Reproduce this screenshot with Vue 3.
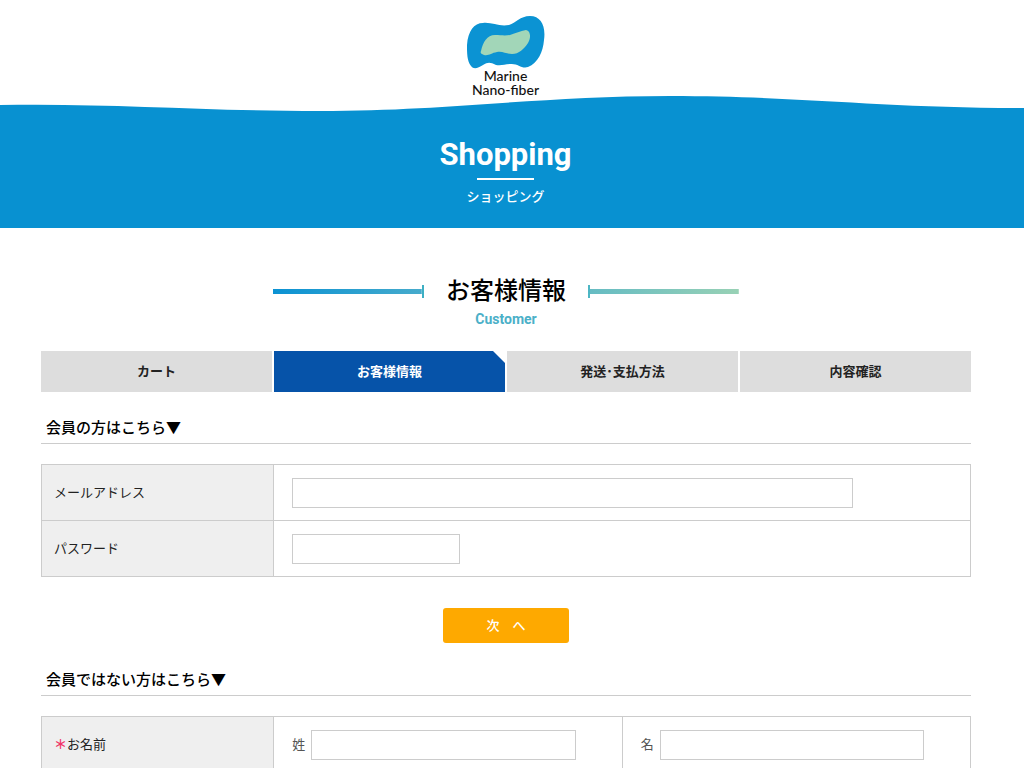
<script setup>
import { ref } from 'vue'

const steps = ['カート', 'お客様情報', '発送･支払方法', '内容確認']
const current = 1
const email = ref('')
const password = ref('')
const lastName = ref('')
const firstName = ref('')
</script>

<template>
  <div class="page">
    <header class="site-header">
      <a class="logo" href="#" aria-label="Marine Nano-fiber">
        <svg class="mark" viewBox="0 0 78 54" aria-hidden="true">
          <path fill="#0b93d3" d="M0 30C1 16 7 8 16 8C25 7 32 12 42 10C49 8 53 1 63 1C74 1 79 11 77 25C76 37 71 48 61 52C54 54 51 48 43 49C37 49 35 51 29 50C23 47 21 47 16 50C11 53 7 55 4 51C0 46 0 38 0 30Z" />
          <path fill="#a2d6b8" d="M14 36C16 27 20 20 28 20C34 20 37 21 43 20C49 18 53 16 59 15C64 16 64 23 61 28C57 34 52 39 45 39C39 39 36 36 30 37C24 38 22 41 17 40C14 39 13 38 14 36Z" />
        </svg>
        <span class="logo-text">Marine<br>Nano-fiber</span>
      </a>
    </header>
    <svg class="wave" viewBox="0 0 1024 16" preserveAspectRatio="none" aria-hidden="true">
      <path fill="#0891d1" d="M0 9C110 7 200 15 320 15C450 15 540 0 670 0C800 0 880 12 1024 12V16H0Z" />
    </svg>
    <div class="banner">
      <h1 class="banner-title">Shopping</h1>
      <p class="banner-sub">ショッピング</p>
    </div>

    <main class="content">
      <div class="heading">
        <span class="rule rule-left"></span>
        <h2>お客様情報</h2>
        <span class="rule rule-right"></span>
      </div>
      <p class="heading-sub">Customer</p>

      <ol class="steps">
        <li v-for="(step, i) in steps" :key="step" :class="{ active: i === current }">{{ step }}</li>
      </ol>

      <form @submit.prevent>
        <h3>会員の方はこちら▼</h3>
        <table>
          <tbody>
            <tr>
              <th scope="row"><label for="email">メールアドレス</label></th>
              <td><input id="email" v-model="email" class="wide" type="email"></td>
            </tr>
            <tr>
              <th scope="row"><label for="password">パスワード</label></th>
              <td><input id="password" v-model="password" class="short" type="password"></td>
            </tr>
          </tbody>
        </table>
        <button type="submit">次　へ</button>
      </form>

      <form @submit.prevent>
        <h3>会員ではない方はこちら▼</h3>
        <table>
          <tbody>
            <tr>
              <th scope="row"><span class="required">＊</span>お名前</th>
              <td>
                <div class="field">
                  <label for="last-name">姓</label>
                  <input id="last-name" v-model="lastName" type="text">
                </div>
              </td>
              <td>
                <div class="field">
                  <label for="first-name">名</label>
                  <input id="first-name" v-model="firstName" type="text">
                </div>
              </td>
            </tr>
          </tbody>
        </table>
      </form>
    </main>
  </div>
</template>

<style>
body {
  background: #fff;
}
</style>

<style scoped>
.page {
  color: #222;
  font-family: Roboto, "Noto Sans CJK JP", sans-serif;
  font-size: 13px;
  line-height: 20px;
}
.site-header,
.banner,
.content {
  box-sizing: border-box;
}
.site-header {
  display: flex;
  justify-content: center;
  padding: 15px 13px 0 0;
}
.logo {
  display: flex;
  flex-direction: column;
  align-items: center;
  color: #111;
  text-decoration: none;
}
.mark {
  width: 78px;
  height: 54px;
}
.logo-text {
  font-family: Lato, sans-serif;
  font-size: 14px;
  font-weight: 500;
  line-height: 14px;
  text-align: center;
}
.wave {
  display: block;
  width: 100%;
  height: 16px;
  margin-top: -1px;
}
.banner {
  margin-top: -1px;
  padding: 24px 13px 21px 0;
  background: #0891d1;
  color: #fff;
  text-align: center;
}
.banner-title {
  margin: 0;
  font-size: 31px;
  font-weight: 700;
  line-height: 40px;
}
.banner-title::after {
  content: "";
  display: block;
  width: 57px;
  height: 2px;
  margin: 3px auto 0;
  background: #fff;
}
.banner-sub {
  margin: 7px 0 0;
  font-weight: 500;
}
.content {
  width: calc((100% - 13px) * 0.92);
  margin-left: 4%;
  padding-top: 44px;
}
.heading {
  display: grid;
  grid-template-columns: 1fr auto 1fr;
  align-items: center;
  gap: 22px;
  width: 50%;
  margin: 0 auto;
}
.heading h2 {
  margin: 0;
  color: #000;
  font-size: 24px;
  font-weight: 500;
  line-height: 38px;
}
.rule {
  height: 13px;
}
.rule-left {
  border-right: 2px solid #3dafc3;
  background: linear-gradient(90deg, #0b92d3, #46abcc) center / 100% 5px no-repeat;
}
.rule-right {
  border-left: 2px solid #4db6c4;
  background: linear-gradient(90deg, #66bcc3, #98d1b5) center / 100% 5px no-repeat;
}
.heading-sub {
  margin: 0;
  color: #4bb0c8;
  font-size: 14px;
  font-weight: 700;
  line-height: 18px;
  text-align: center;
}
.steps {
  display: grid;
  grid-template-columns: repeat(4, 1fr);
  gap: 2px;
  margin: 23px 0 26px;
  padding: 0;
  list-style: none;
  font-weight: 700;
  line-height: 41px;
  text-align: center;
}
.steps li {
  background: #ddd;
}
.steps .active {
  background: #0653a9;
  color: #fff;
  clip-path: polygon(0 0, calc(100% - 12px) 0, 100% 12px, 100% 100%, 0 100%);
}
h3 {
  margin: 0 0 20px;
  padding: 0 5px 5px;
  border-bottom: 1px solid #ccc;
  color: #000;
  font-size: 15px;
  font-weight: 500;
  line-height: 20px;
}
table {
  width: 100%;
  border-collapse: collapse;
  table-layout: fixed;
}
th,
td {
  box-sizing: border-box;
  height: 56px;
  border: 1px solid #ccc;
  text-align: left;
}
th {
  width: 25%;
  padding: 0 12px;
  background: #efefef;
  font-weight: 400;
}
td {
  padding: 0 18px;
}
.required {
  color: #f03468;
  font-weight: 700;
}
input {
  box-sizing: border-box;
  display: block;
  height: 30px;
  padding: 4px 6px;
  border: 1px solid #ccc;
  border-radius: 0;
  background: #fff;
  font: inherit;
}
.wide {
  width: 85%;
}
.short {
  width: 168px;
}
.field {
  display: flex;
  align-items: center;
  gap: 6px;
  color: #555;
}
.field input {
  flex: 0 1 85%;
  min-width: 0;
}
button {
  display: block;
  width: 126px;
  height: 35px;
  margin: 31px auto 27px;
  padding: 0;
  border: 0;
  border-radius: 3px;
  background: #fea900;
  color: #fff;
  font: inherit;
  font-weight: 500;
}
</style>
